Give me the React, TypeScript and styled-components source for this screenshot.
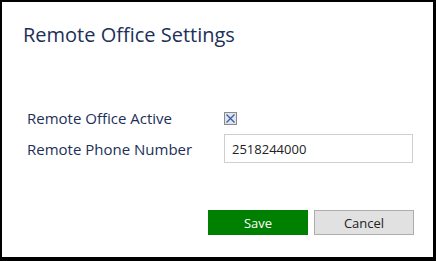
import React, { useState } from "react";
import styled, { createGlobalStyle } from "styled-components";

const GlobalStyle = createGlobalStyle`
  html, body {
    margin: 0;
    padding: 0;
    background: #fff;
  }
  * {
    box-sizing: border-box;
  }
`;

const Frame = styled.div`
  width: 436px;
  height: 261px;
  background: #fff;
  border-style: solid;
  border-color: #000;
  border-width: 2px 3px 4px 2px;
  font-family: "Open Sans", "Noto Sans", sans-serif;
  color: #1c3058;
  padding: 19px 0 0 21px;
`;

const Title = styled.h1`
  margin: 0;
  font-size: 20px;
  font-weight: 400;
  line-height: 28px;
`;

const Form = styled.div`
  margin-top: 59px;
  display: grid;
  grid-template-columns: 197px 189px;
  row-gap: 6px;
  padding-left: 4px;
  align-items: center;
`;

const Label = styled.label`
  font-size: 15px;
  line-height: 20px;
`;

const Check = styled.span<{ checked: boolean }>`
  width: 13px;
  height: 13px;
  border: 1px solid #8a8a8a;
  background: #dfe4ec;
  display: flex;
  align-items: center;
  justify-content: center;
  svg {
    display: ${(p) => (p.checked ? "block" : "none")};
  }
`;

const Input = styled.input`
  width: 189px;
  height: 29px;
  border: 1px solid #cfcfcf;
  padding: 0 7px;
  font-family: "Open Sans", "Noto Sans", sans-serif;
  font-size: 13px;
  color: #222;
  outline: none;
`;

const Actions = styled.div`
  margin-top: 47px;
  display: flex;
  gap: 6px;
  padding-left: 185px;
`;

const Button = styled.button<{ primary?: boolean }>`
  width: 100px;
  height: 25px;
  font-family: "Open Sans", "Noto Sans", sans-serif;
  font-size: 13px;
  padding: 0;
  cursor: pointer;
  color: ${(p) => (p.primary ? "#fff" : "#222")};
  background: ${(p) => (p.primary ? "#008000" : "#e1e1e1")};
  border: 1px solid ${(p) => (p.primary ? "#008000" : "#adadad")};
`;

export default function App() {
  const [active, setActive] = useState(true);
  const [phone, setPhone] = useState("2518244000");

  return (
    <>
      <GlobalStyle />
      <Frame>
        <Title>Remote Office Settings</Title>
        <Form>
          <Label>Remote Office Active</Label>
          <div>
            <Check checked={active} onClick={() => setActive(!active)}>
              <svg width="11" height="11" viewBox="0 0 11 11">
                <path
                  d="M1.5 1.5 L9.5 9.5 M9.5 1.5 L1.5 9.5"
                  stroke="#3a5aa8"
                  strokeWidth="1.2"
                  fill="none"
                />
              </svg>
            </Check>
          </div>
          <Label>Remote Phone Number</Label>
          <Input value={phone} onChange={(e) => setPhone(e.target.value)} />
        </Form>
        <Actions>
          <Button primary>Save</Button>
          <Button>Cancel</Button>
        </Actions>
      </Frame>
    </>
  );
}
